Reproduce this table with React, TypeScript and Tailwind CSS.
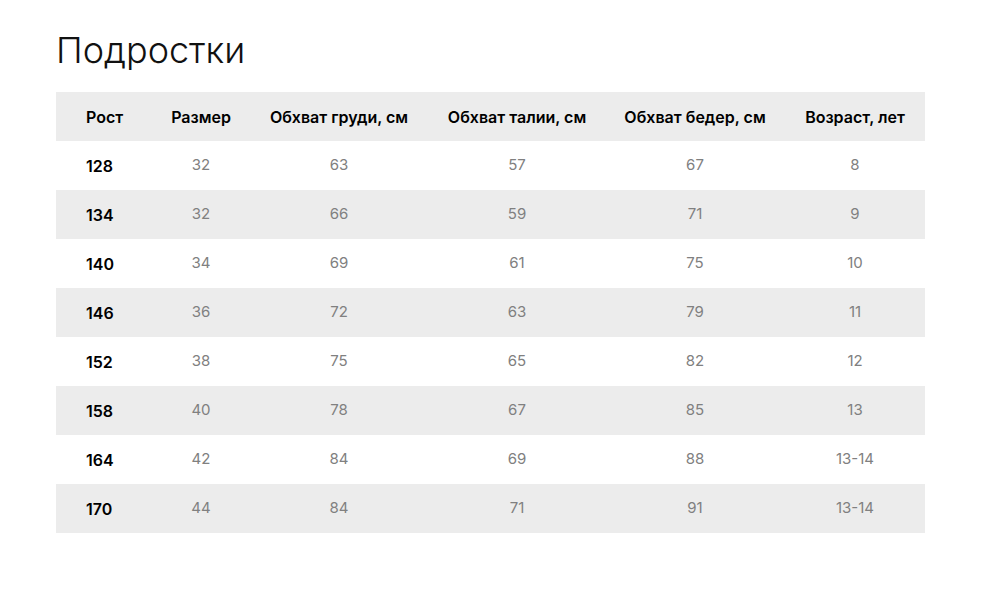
const headers = [
  "Рост",
  "Размер",
  "Обхват груди, см",
  "Обхват талии, см",
  "Обхват бедер, см",
  "Возраст, лет",
];

const rows = [
  ["128", "32", "63", "57", "67", "8"],
  ["134", "32", "66", "59", "71", "9"],
  ["140", "34", "69", "61", "75", "10"],
  ["146", "36", "72", "63", "79", "11"],
  ["152", "38", "75", "65", "82", "12"],
  ["158", "40", "78", "67", "85", "13"],
  ["164", "42", "84", "69", "88", "13-14"],
  ["170", "44", "84", "71", "91", "13-14"],
];

const cols = "grid grid-cols-[97px_96px_180px_176px_180px_140px]";

export default function App() {
  return (
    <div className="min-h-[592px] bg-white px-[56px] pt-[29px] font-['Inter',sans-serif]">
      <h1 className="text-[36px] font-light leading-[42px] text-[#111]">Подростки</h1>
      <div className="mt-[21px] w-[869px]">
        <div className={`${cols} h-[49px] items-center bg-[#ececec] text-[16px] font-semibold text-black`}>
          {headers.map((h, i) => (
            <div key={h} className={i === 0 ? "pl-[30px]" : "text-center"}>
              {h}
            </div>
          ))}
        </div>
        {rows.map((r, ri) => (
          <div
            key={r[0]}
            className={`${cols} h-[49px] items-center text-[15px] ${ri % 2 === 1 ? "bg-[#ececec]" : "bg-white"}`}
          >
            {r.map((c, i) => (
              <div
                key={i}
                className={i === 0 ? "pl-[30px] text-[16px] font-semibold text-black" : "text-center text-[#808080]"}
              >
                {c}
              </div>
            ))}
          </div>
        ))}
      </div>
    </div>
  );
}
